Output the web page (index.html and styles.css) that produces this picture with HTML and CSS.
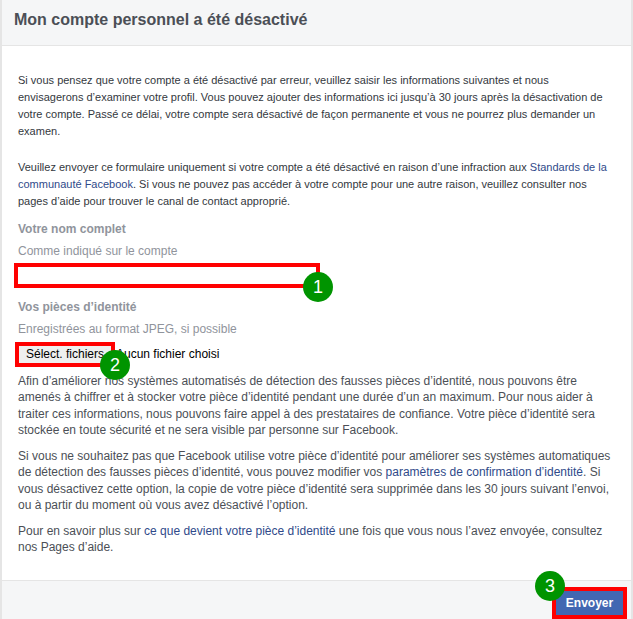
FILE: index.html
```html
<!DOCTYPE html>
<html lang="fr">
<head>
<meta charset="utf-8">
<title>Mon compte personnel a été désactivé</title>
<link rel="stylesheet" href="styles.css">
</head>
<body>
<div class="dialog">
  <header class="head"><h1>Mon compte personnel a été désactivé</h1></header>
  <main class="content">
    <p class="intro">Si vous pensez que votre compte a été désactivé par erreur, veuillez saisir les informations suivantes et nous envisagerons d’examiner votre profil. Vous pouvez ajouter des informations ici jusqu’à 30 jours après la désactivation de votre compte. Passé ce délai, votre compte sera désactivé de façon permanente et vous ne pourrez plus demander un examen.</p>
    <p class="intro second">Veuillez envoyer ce formulaire uniquement si votre compte a été désactivé en raison d’une infraction aux <a href="#">Standards de la communauté Facebook</a>. Si vous ne pouvez pas accéder à votre compte pour une autre raison, veuillez consulter nos pages d’aide pour trouver le canal de contact approprié.</p>
    <div class="field name-field">
      <div class="label">Votre nom complet</div>
      <div class="hint">Comme indiqué sur le compte</div>
      <div class="mark-wrap">
        <input class="text-input" type="text" aria-label="Votre nom complet">
        <span class="badge badge-one">1</span>
      </div>
    </div>
    <div class="field id-field">
      <div class="label">Vos pièces d’identité</div>
      <div class="hint">Enregistrées au format JPEG, si possible</div>
      <div class="file-row">
        <span class="file-mark"><button class="file-btn" type="button">Sélect. fichiers</button><span class="badge badge-two">2</span></span>
        <span class="file-none">Aucun fichier choisi</span>
      </div>
    </div>
    <div class="info">
      <p>Afin d’améliorer nos systèmes automatisés de détection des fausses pièces d’identité, nous pouvons être amenés à chiffrer et à stocker votre pièce d’identité pendant une durée d’un an maximum. Pour nous aider à traiter ces informations, nous pouvons faire appel à des prestataires de confiance. Votre pièce d’identité sera stockée en toute sécurité et ne sera visible par personne sur Facebook.</p>
      <p>Si vous ne souhaitez pas que Facebook utilise votre pièce d’identité pour améliorer ses systèmes automatiques de détection des fausses pièces d’identité, vous pouvez modifier vos <a href="#">paramètres de confirmation d’identité</a>. Si vous désactivez cette option, la copie de votre pièce d’identité sera supprimée dans les 30 jours suivant l’envoi, ou à partir du moment où vous avez désactivé l’option.</p>
      <p>Pour en savoir plus sur <a href="#">ce que devient votre pièce d’identité</a> une fois que vous nous l’avez envoyée, consultez nos Pages d’aide.</p>
    </div>
  </main>
  <footer class="foot">
    <span class="send-mark"><button class="send" type="button">Envoyer</button><span class="badge badge-three">3</span></span>
  </footer>
</div>
</body>
</html>
```
FILE: styles.css
```css
* { box-sizing: border-box; }
html, body { margin: 0; padding: 0; background: #fff; }
body { width: 633px; height: 619px; overflow: hidden; font-family: "Liberation Sans", Arial, sans-serif; color: #1d2129; }
.dialog { height: 619px; border-left: 2px solid #e5e5e5; border-right: 2px solid #e5e5e5; display: flex; flex-direction: column; }
.head { height: 46px; flex: none; background: #f5f6f7; border-bottom: 1px solid #e5e5e5; padding: 11px 12px 0; }
h1 { margin: 0; font-size: 16px; line-height: 18px; font-weight: bold; color: #4b4f56; }
.content { flex: 1; padding: 26px 16px 0; font-size: 12px; }
.intro { margin: 0; font-size: 11px; line-height: 17px; color: #333840; }
.second { margin-top: 19px; }
a { color: #2f4a8a; text-decoration: none; }
.field { color: #90949c; }
.name-field { margin-top: 10px; }
.id-field { margin-top: 10px; }
.label { font-weight: bold; font-size: 12px; line-height: 18px; }
.hint { font-size: 12px; line-height: 16px; margin-top: 5px; }
.mark-wrap { position: relative; width: 306px; margin-top: 4px; margin-left: -4px; }
.text-input { display: block; width: 306px; height: 25px; border: 4px solid #f00; background: #fff; padding: 0; outline: 0; }
.badge { position: absolute; width: 30px; height: 30px; border-radius: 50%; background: #009400; color: #fff; font-size: 18px; line-height: 30px; text-align: center; }
.badge-one { left: 289px; top: 9px; }
.file-row { display: flex; align-items: center; margin-top: 5px; height: 25px; color: #000; }
.file-mark { position: relative; display: block; width: 100px; height: 25px; margin-left: -3px; border: 4px solid #f00; flex: none; }
.file-btn { display: block; width: 100%; height: 100%; margin: 0; padding: 0 0 2px 7px; border: 0; background: #efefef; color: #000; font: 12px "Liberation Sans", Arial, sans-serif; text-align: left; white-space: nowrap; overflow: visible; }
.badge-two { left: 81px; top: 4px; }
.file-none { margin-left: 1px; padding-bottom: 2px; font-size: 12px; }
.info { margin-top: 6px; font-size: 12px; line-height: 16.4px; color: #4b4f56; }
.info p { margin: 0 0 9.4px; }
.foot { height: 39px; flex: none; background: #f5f6f7; border-top: 1px solid #e5e5e5; display: flex; justify-content: flex-end; align-items: flex-start; padding: 6px 4px 0 0; }
.send-mark { position: relative; display: block; }
.send { display: block; width: 75px; height: 32px; border: 4px solid #f00; background: #4267b2; color: #fff; font: bold 12px "Liberation Sans", Arial, sans-serif; padding: 0; }
.badge-three { left: -17px; top: -16px; }
```
